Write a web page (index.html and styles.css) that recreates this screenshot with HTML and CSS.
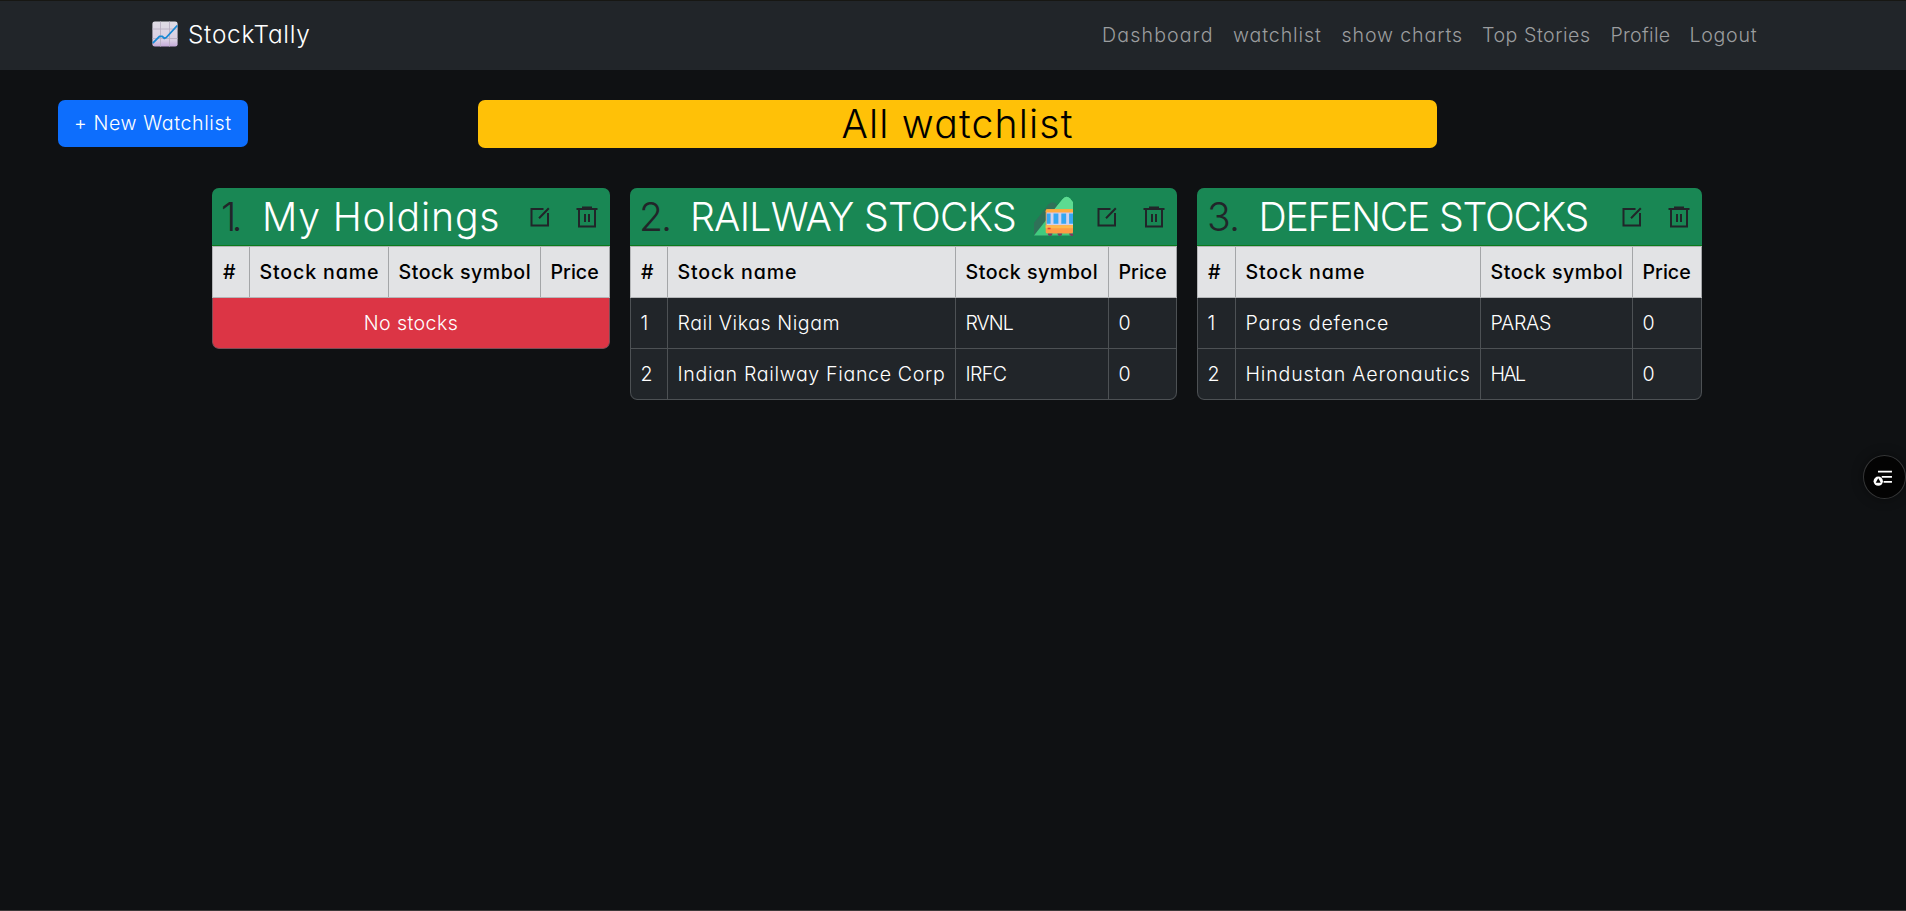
FILE: index.html
```
<!DOCTYPE html>
<html lang="en">
<head>
<meta charset="utf-8">
<title>StockTally</title>
<link rel="stylesheet" href="styles.css">
</head>
<body>
<svg class="defs" width="0" height="0" aria-hidden="true">
  <symbol id="edit" viewBox="0 0 20 20">
    <path d="M13.500 2H1.500v16.500h16.500V6M9 11.200 18.800 1.200" fill="none" stroke="#212529" stroke-width="2"/>
  </symbol>
  <symbol id="trash" viewBox="0 0 22 22">
    <path d="M.5 3h21M6 1.500h10M3 3.500v17h16V3.500M9 8v8M13 8v8" fill="none" stroke="#212529" stroke-width="2"/>
  </symbol>
</svg>
<nav class="navbar">
  <a class="brand">
    <svg class="brand-icon" viewBox="0 0 26 26">
      <defs><linearGradient id="paper" x1="0" y1="0" x2="0" y2="1"><stop offset="0" stop-color="#dfdce4"/><stop offset=".75" stop-color="#d9cfe4"/><stop offset="1" stop-color="#c3a8d8"/></linearGradient></defs>
      <rect x=".4" y=".4" width="25.2" height="25.2" rx="2.4" fill="url(#paper)"/>
      <path d="M8.5 .5v25M17.5 .5v25M.5 8h25M.5 17.500h25" stroke="#b9b0c2" stroke-width=".9"/>
      <path d="M.8 22.200 7.500 15.300 10.300 15.300 12.300 17.300 14.300 16.500 25.300 4.500" fill="none" stroke="#1688d4" stroke-width="1.8" stroke-linejoin="round"/>
    </svg>
    <span class="brand-name">StockTally</span>
  </a>
  <div class="links">
    <a class="l-dash">Dashboard</a><a class="l-watch">watchlist</a><a class="l-charts">show charts</a><a class="l-top">Top Stories</a><a class="l-prof">Profile</a><a class="l-out">Logout</a>
  </div>
</nav>
<div class="toolbar">
  <button class="new">+ New Watchlist</button>
  <h1 class="title">All watchlist</h1>
</div>
<main class="cards">
  <section class="card holdings">
    <header><span class="no">1.</span><span class="name">My Holdings</span><svg class="edit"><use href="#edit"/></svg><svg class="trash"><use href="#trash"/></svg></header>
    <div class="row head"><span>#</span><span class="t-name">Stock name</span><span class="t-symbol">Stock symbol</span><span>Price</span></div>
    <div class="empty">No stocks</div>
  </section>
  <section class="card railway">
    <header><span class="no">2.</span><span class="name">RAILWAY STOCKS</span>
      <svg class="emoji" viewBox="0 0 40 41">
        <path d="M0 34V27L15 8q4-4 8 0l4 6v26H0z" fill="#2f7158"/>
        <path d="M0 40 29 3q4-5 8-1l3 4v34z" fill="#41cb7e"/>
        <path d="M20 14 29 3q4-5 8-1l3 4v8z" fill="#5ddb91"/>
        <rect x="12" y="13" width="28" height="25" rx="1.500" fill="#ff9a45"/>
        <path d="M12 15q0-2 2-2h26v3H12z" fill="#ffac3d"/>
        <path d="M13 16.500h27v13H13z" fill="#d3d1ec"/>
        <path d="M13 17.500h4v10.500h-4zM20 17.500h5v10.500h-5zM28 17.500h5v10.500h-5zM36 17.500h4v10.500h-4z" fill="#36a7f2"/>
        <path d="M12 29.500h28v3H12z" fill="#ffb94e"/><path d="M14 32h3v1.600h-3z" fill="#e63b37"/>
        <path d="M14 38h5q0 2.500-2.500 2.500T14 38zM24 38h5q0 2.500-2.500 2.500T24 38zM36 38h4v2.500h-1.500q-2.500 0-2.500-2.500z" fill="#7c3c60"/>
      </svg>
      <svg class="edit"><use href="#edit"/></svg><svg class="trash"><use href="#trash"/></svg></header>
    <div class="row head"><span>#</span><span class="t-name">Stock name</span><span class="t-symbol">Stock symbol</span><span>Price</span></div>
    <div class="row"><span>1</span><span class="t-rail">Rail Vikas Nigam</span><span class="t-rvnl">RVNL</span><span>0</span></div>
    <div class="row"><span>2</span><span class="t-indian">Indian Railway Fiance Corp</span><span class="t-irfc">IRFC</span><span>0</span></div>
  </section>
  <section class="card defence">
    <header><span class="no">3.</span><span class="name">DEFENCE STOCKS</span><svg class="edit"><use href="#edit"/></svg><svg class="trash"><use href="#trash"/></svg></header>
    <div class="row head"><span>#</span><span class="t-name">Stock name</span><span class="t-symbol">Stock symbol</span><span>Price</span></div>
    <div class="row"><span>1</span><span class="t-paras">Paras defence</span><span class="t-par">PARAS</span><span>0</span></div>
    <div class="row"><span>2</span><span class="t-hind">Hindustan Aeronautics</span><span class="t-hal">HAL</span><span>0</span></div>
  </section>
</main>
<div class="side-button">
  <svg viewBox="0 0 44 44">
    <path d="M15 16.300h15M19 21.800h11M21 27.300h9" stroke="#fff" stroke-width="2" fill="none"/>
    <circle cx="15.300" cy="26.500" r="5" fill="#fff"/>
    <path d="M15.300 23.300 18 28.300h-5.400z" fill="#050505"/>
  </svg>
</div>
</body>
</html>
```
FILE: styles.css
```
* { box-sizing: border-box; }

body {
  margin: 0;
  height: 911px;
  overflow: hidden;
  background: #0f1113;
  border-top: 1px solid #171713;
  border-bottom: 1px solid #3b3838;
  color: #fff;
  font: 300 19.6px/1.5 Inter, "Open Sans", sans-serif;
  font-feature-settings: "cv11";
  white-space: nowrap;
}

.defs { position: absolute; }

.navbar {
  display: flex;
  justify-content: space-between;
  align-items: center;
  height: 69px;
  padding: 0 141px 0 151.500px;
  background: #212529;
}

.brand { display: flex; align-items: center; gap: 10.500px; margin-top: -2px; }
.brand-icon { width: 26px; height: 26px; }
.brand-name { font-size: 24.4px; letter-spacing: .7px; }

.links { display: flex; width: 663px; justify-content: flex-start; color: #9b9d9f; }
.links a { flex: none; }
.l-dash { width: 131px; letter-spacing: 1.15px; }
.l-watch { width: 108.5px; letter-spacing: .9px; }
.l-charts { width: 140.5px; letter-spacing: .88px; }
.l-top { width: 128.5px; letter-spacing: .53px; }
.l-prof { width: 79px; letter-spacing: .3px; }
.l-out { letter-spacing: .7px; }

.toolbar { display: flex; gap: 230px; padding: 30px 0 0 58px; }

.new {
  width: 190px;
  height: 47px;
  padding: 1px 0 0 16px;
  border: 0;
  border-radius: 7px;
  background: #0d6efd;
  color: #fff;
  font: inherit;
  font-feature-settings: inherit;
  letter-spacing: .6px;
  text-align: left;
}

.title {
  width: 959px;
  height: 48px;
  margin: 0;
  border-radius: 7px;
  background: #ffc107;
  color: #000;
  font-size: 39.2px;
  font-weight: 300;
  line-height: 48px;
  letter-spacing: 1.15px;
  text-align: center;
}

.cards { display: flex; align-items: flex-start; gap: 20px; padding: 40px 0 0 212px; }

.card { border-radius: 7px; overflow: hidden; background: #212529; }
.holdings { width: 398px; --cols: 37px 139px 152px 70px; }
.railway { width: 547px; --cols: 37px 288px 153px 69px; }
.defence { width: 505px; --cols: 38px 245px 152px 70px; }

.card header {
  display: flex;
  align-items: center;
  height: 58px;
  padding-right: 12px;
  background: #198754;
  border-bottom: 1px solid #0c7a1c;
  font-size: 39.2px;
  line-height: 57px;
}

.no { color: #212529; padding-left: 9px; }
.name { flex: 1; }
.holdings .no { width: 50px; letter-spacing: -5px; }
.railway .no { width: 60px; letter-spacing: -2px; }
.defence .no { width: 61.5px; letter-spacing: -.9px; padding-left: 10px; }
.holdings .name { letter-spacing: .83px; }
.railway .name { letter-spacing: -.75px; }
.defence .name { letter-spacing: -1.26px; }

.edit { width: 20px; height: 20px; margin-right: 26px; }
.trash { width: 22px; height: 22px; }
.emoji { width: 39px; height: 41px; margin-right: 24px; }

.row {
  display: grid;
  grid-template-columns: var(--cols);
  height: 51px;
  border-bottom: 1px solid #4d5154;
  line-height: 50px;
}
.row span { padding-left: 9.5px; border-left: 1px solid #4d5154; }
.row span:last-child { border-right: 1px solid #4d5154; }

.head {
  height: 52px;
  border-top: 1px solid #b4b6b8;
  border-bottom-color: #b4b6b8;
  background: #e2e3e5;
  color: #000;
  font-weight: 450;
}
.row.head span { border-color: #a4a6a8; }
.row.head span:first-child { border-left-color: #b4b6b8; letter-spacing: 0; padding-left: 10px; }

.empty {
  height: 51px;
  background: #dc3545;
  border: 1px solid #7d4c55;
  border-top: 0;
  border-radius: 0 0 7px 7px;
  line-height: 50px;
  letter-spacing: .41px;
  text-align: center;
}
.row:last-child { border-radius: 0 0 7px 7px; }
.row:last-child span:first-child { border-bottom-left-radius: 7px; }
.row:last-child span:last-child { border-bottom-right-radius: 7px; }

.t-name { letter-spacing: .85px; }
.t-symbol { letter-spacing: .5px; }
.t-rail { letter-spacing: .55px; }
.t-indian { letter-spacing: .65px; }
.t-rvnl { letter-spacing: -1px; }
.t-irfc { letter-spacing: -.6px; }
.t-paras { letter-spacing: .85px; }
.t-hind { letter-spacing: .83px; }
.t-par { letter-spacing: -.29px; }
.t-hal { letter-spacing: -1.6px; }

.side-button {
  position: absolute;
  top: 455px;
  left: 1863px;
  width: 43px;
  height: 44px;
  border-radius: 50%;
  background: #030303;
  border: 1px solid #343536;
  box-shadow: 0 0 12px rgba(0, 0, 0, .4);
}
.side-button svg { display: block; width: 41px; height: 42px; }
```
